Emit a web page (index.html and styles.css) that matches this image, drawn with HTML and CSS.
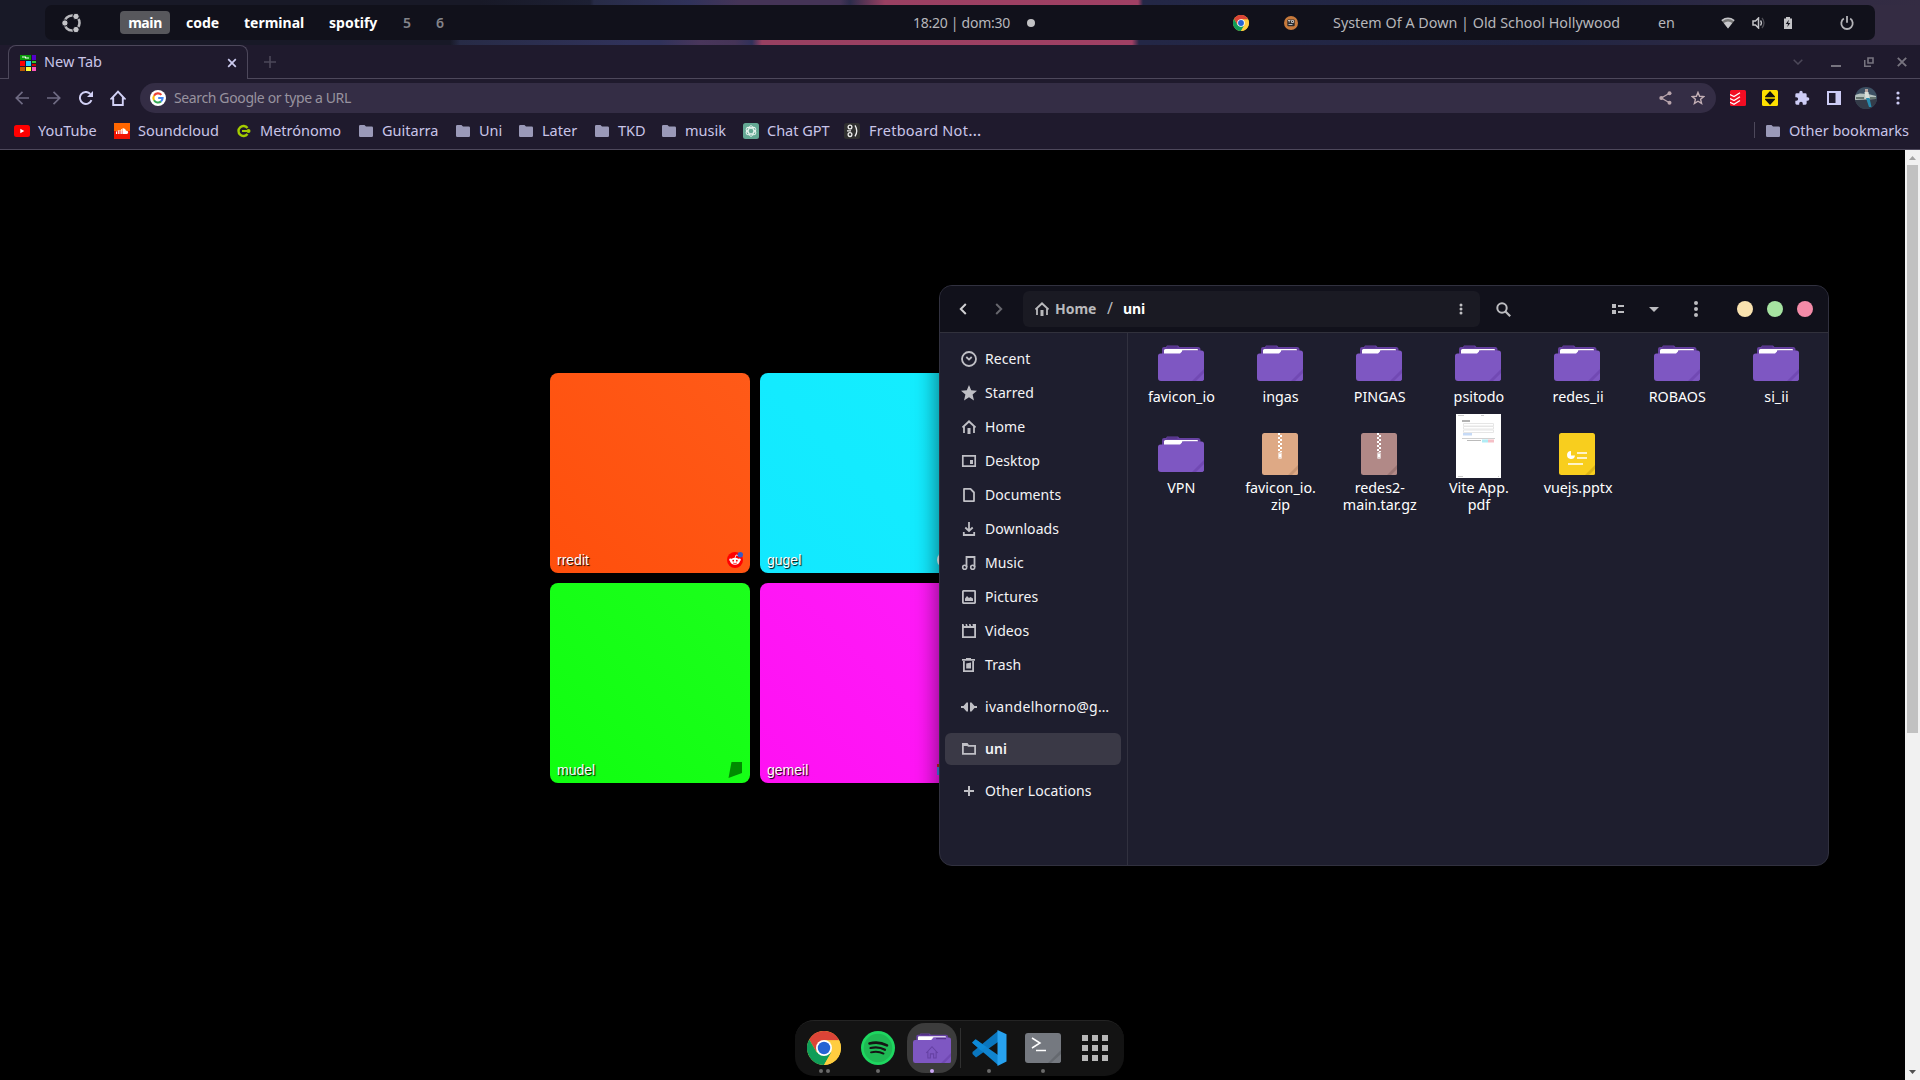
FILE: index.html
```html
<!DOCTYPE html>
<html lang="en">
<head>
<meta charset="utf-8">
<title>New Tab</title>
<link rel="stylesheet" href="styles.css">
</head>
<body>
<svg class="defs" width="0" height="0">
  <symbol id="folder" viewBox="0 0 46 36">
    <path d="M4 10V4a2 2 0 0 1 2-2h2l1-1.5h11L21.500 2H40a2.500 2.500 0 0 1 2.500 2.500V10z" fill="#6641a0"/>
    <path d="M9 1.500h10.500v1H9z" fill="#4b2d7c"/>
    <path d="M6 5.500a1.500 1.500 0 0 1 1.500-1.500H39a1 1 0 0 1 1 1v5H6z" fill="#fff"/>
    <path d="M24 5.500h16V8H24z" fill="#6641a0"/>
    <path d="M0 11a2.500 2.500 0 0 1 2.500-2.500H22L24.500 6a2 2 0 0 1 1.500-.6h17.500A2.500 2.500 0 0 1 46 7.900V33a3 3 0 0 1-3 3H3a3 3 0 0 1-3-3z" fill="#7e57c2"/>
    <path d="M46 24v9a3 3 0 0 1-3 3h-9z" fill="#7149b3"/>
    <path d="M46 28v5a3 3 0 0 1-3 3h-5z" fill="#7e57c2"/>
  </symbol>
  <symbol id="bmfolder" viewBox="0 0 14 12">
    <path d="M0 1.300A1.300 1.300 0 0 1 1.300 0H5.500L7 1.500h5.700A1.300 1.300 0 0 1 14 2.800v7.900a1.300 1.300 0 0 1-1.300 1.300H1.300A1.300 1.300 0 0 1 0 10.700z" fill="#9a99b8"/>
  </symbol>
  <symbol id="chrome" viewBox="0 0 48 48">
    <circle cx="24" cy="24" r="24" fill="#fc3"/>
    <path d="M3.200 12A24 24 0 0 1 44.800 12L44.800 13.500H24L13 29z" fill="#db4437"/>
    <path d="M3.200 12A24 24 0 0 0 24 48L34.400 30 24 34 13.600 30z" fill="#0f9d58"/>
    <path d="M24 13.200H45.400A24 24 0 0 1 24 48L34.400 30z" fill="#ffcd40"/>
    <circle cx="24" cy="24" r="11.300" fill="#fff"/>
    <circle cx="24" cy="24" r="8.800" fill="#2563d4"/>
  </symbol>
  <symbol id="home" viewBox="0 0 16 16">
    <path d="M3 14V7.200L8 2.500l5 4.700V14M1.500 8.500L8 2.300l6.500 6.200" fill="none" stroke="currentColor" stroke-width="1.800"/>
    <path d="M6.500 9h3v6h-3z" fill="currentColor"/>
  </symbol>
  <symbol id="zipper" viewBox="0 0 36 42">
    <path d="M17 0v19" stroke="#fff" stroke-width="2" stroke-dasharray="2 2"/>
    <path d="M19 2v17" stroke="#fff" stroke-width="2" stroke-dasharray="2 2"/>
    <rect x="16" y="19" width="4" height="7" rx="1.500" fill="#fff" fill-opacity=".6"/>
    <rect x="17" y="21" width="2" height="3" fill="#fff"/>
  </symbol>
</svg>

<header class="topbar">
  <div class="panel">
    <svg class="distro" viewBox="0 0 20 20"><circle cx="10" cy="10" r="7.500" fill="none" stroke="#b9b9bd" stroke-width="2.600"/><g fill="#c4c4c8" stroke="#11111b" stroke-width="1"><circle cx="2.900" cy="10" r="3.200"/><circle cx="14" cy="3.400" r="3.200"/><circle cx="14" cy="16.600" r="3.200"/></g></svg>
    <nav class="spaces">
      <span class="space active">main</span><span class="space s2">code</span><span class="space s3">terminal</span><span class="space s4">spotify</span><span class="space s5 dim">5</span><span class="space s6 dim">6</span>
    </nav>
    <div class="clock">18:20 | dom:30</div>
    <span class="notify"></span>
    <div class="tray">
      <svg class="t-chrome" width="16" height="16"><use href="#chrome"/></svg>
      <svg class="t-mate" width="14" height="14" viewBox="0 0 14 14"><circle cx="7" cy="7" r="7" fill="#c87a3c"/><rect x="3.300" y="3.600" width="7.400" height="6.600" rx="1" fill="#2b2b2e"/><path d="M4 4.500h2.500M5.200 4.500v2M7.500 4.500h2v2h-2zM4.500 8.500h4" stroke="#ddd" stroke-width=".8" fill="none"/></svg>
      <span class="song">System Of A Down | Old School Hollywood</span>
      <span class="lang">en</span>
      <svg class="t-wifi" width="14" height="12" viewBox="0 0 14 12"><path d="M0.500 3.500Q7-1.500 13.500 3.500L7 11.500z" fill="#777"/><path d="M.8 3.600Q7-1 13.200 3.600" fill="none" stroke="#c3c3c7" stroke-width="1.500"/><path d="M2.800 6Q7 3 11.200 6L7 11.500z" fill="#c8c8cc"/></svg>
      <svg class="t-vol" width="14" height="12" viewBox="0 0 14 12"><path d="M1 4h2.500L6.500 1v10L3.500 8H1z" fill="none" stroke="#c3c3c7" stroke-width="1.500"/><path d="M8.500 3.500q2 2.500 0 5" fill="none" stroke="#c3c3c7" stroke-width="1.300"/><path d="M10 1q4 5 0 10" fill="none" stroke="#4c4c54" stroke-width="1.300"/></svg>
      <svg class="t-bat" width="8" height="12" viewBox="0 0 8 12"><path d="M0 1.500h2V0h4v1.500h2V12H0z" fill="#c3c3c7"/><path d="M4.800 2.800L1.800 7H4l-.7 3L6.300 6H4.200z" fill="#11111b"/></svg>
      <svg class="t-pow" width="14" height="14" viewBox="0 0 14 14"><path d="M3.800 2.600a5.700 5.700 0 1 0 6.400 0M7 0v6.800" fill="none" stroke="#b4b4b8" stroke-width="1.800"/></svg>
    </div>
  </div>
</header>

<main class="browser">
  <div class="tabstrip">
    <div class="tab">
      <svg width="16" height="16" viewBox="0 0 16 16"><path d="M0 0h11v5H0z" fill="#0a9a0a"/><path d="M2 1.500h4v1h3v1H5v-1H2z" fill="#fff"/><path d="M12 0h4v5h-4z" fill="#50c"/><path d="M0 6h5v5H0z" fill="#f00"/><path d="M6 6h5v5H6z" fill="#2cf"/><path d="M12 6h4v2h-4z" fill="#3c3"/><path d="M12 9h4v2h-4z" fill="#c00"/><path d="M0 12h5v4H0z" fill="#b50"/><path d="M6 12h5v4H6z" fill="#ff3"/><path d="M12 12h4v4h-4z" fill="#f5b"/></svg>
      <span class="tabname">New Tab</span>
      <svg width="10" height="10" viewBox="0 0 10 10"><path d="M1.200 1.200l7.600 7.600M8.800 1.200L1.200 8.800" stroke="#cdccf0" stroke-width="1.700"/></svg>
    </div>
    <svg class="newtab" width="12" height="12" viewBox="0 0 12 12"><path d="M6 0v12M0 6h12" stroke="#4c4859" stroke-width="1.600"/></svg>
    <div class="winbtns">
      <svg width="10" height="6" viewBox="0 0 10 6"><path d="M.7.700L5 5l4.300-4.300" fill="none" stroke="#4c4859" stroke-width="1.500"/></svg>
      <svg width="10" height="10" viewBox="0 0 10 10"><path d="M0 9h10" stroke="#77747f" stroke-width="2"/></svg>
      <svg width="10" height="10" viewBox="0 0 10 10"><path d="M4 1h5v5H4zM.7 3v6.300H7" fill="none" stroke="#77747f" stroke-width="1.600"/></svg>
      <svg width="10" height="10" viewBox="0 0 10 10"><path d="M.8.800l8.400 8.400M9.200.800L.8 9.200" stroke="#77747f" stroke-width="1.900"/></svg>
    </div>
  </div>
  <div class="toolbar">
    <div class="navbtns">
      <svg width="14" height="14" viewBox="0 0 14 14"><path d="M14 7H1.500M7.500.8L1.300 7l6.200 6.200" fill="none" stroke="#6f6b83" stroke-width="1.700"/></svg>
      <svg width="14" height="14" viewBox="0 0 14 14"><path d="M0 7h12.500M6.500.8L12.700 7l-6.200 6.200" fill="none" stroke="#6f6b83" stroke-width="1.700"/></svg>
      <svg width="14" height="14" viewBox="0 0 14 14"><path d="M12.500 9.200A6 6 0 1 1 11.300 2.800" fill="none" stroke="#d2d1f5" stroke-width="1.900"/><path d="M14 0v6H8z" fill="#d2d1f5"/></svg>
      <svg width="16" height="16" viewBox="0 0 16 16"><path d="M3.200 15V8.500H1.500L8 1.600l6.500 6.900h-1.700V15z" fill="none" stroke="#d2d1f5" stroke-width="1.900"/></svg>
    </div>
    <div class="omnibox">
      <svg width="16" height="16" viewBox="0 0 16 16"><circle cx="8" cy="8" r="8" fill="#fff"/><g fill="none" stroke-width="2.100"><path d="M11.400 4.900A4.600 4.600 0 0 0 4 5.700" stroke="#ea4335"/><path d="M4 5.700a4.600 4.600 0 0 0 0 4.600" stroke="#fbbc05"/><path d="M4 10.300a4.600 4.600 0 0 0 7 1.100" stroke="#34a853"/><path d="M11 11.400A4.600 4.600 0 0 0 12.600 8H8.200" stroke="#4285f4"/></g></svg>
      <span class="query">Search Google or type a URL</span>
      <svg class="share" width="13" height="14" viewBox="0 0 13 14"><path d="M10.500 2.300L2.300 7l8.200 4.700" fill="none" stroke="#b8a4ac" stroke-width="1.300"/><g fill="#b8a4ac"><circle cx="10.500" cy="2.300" r="2"/><circle cx="2.300" cy="7" r="2"/><circle cx="10.500" cy="11.700" r="2"/></g></svg>
      <svg class="star" width="14" height="14" viewBox="0 0 14 14"><path d="M7 1.400l1.600 3.900 4.200.3-3.200 2.700 1 4.100L7 10.200l-3.600 2.200 1-4.100L1.200 5.600l4.200-.3z" fill="none" stroke="#c3afb5" stroke-width="1.400"/></svg>
    </div>
    <div class="exts">
      <svg width="16" height="16" viewBox="0 0 16 16"><rect width="16" height="16" rx="1.500" fill="#f20d23"/><path d="M0 4.500l4 2 6-3.800M0 8.500l4 2 6-3.800M0 12.300l4 2 6-3.800" fill="none" stroke="#fff" stroke-width="1.300"/></svg>
      <svg width="16" height="16" viewBox="0 0 16 16"><rect width="16" height="16" rx="1.500" fill="#fee000"/><path d="M8 1l5 5.500V7H3v-.5zM3 9h10v.5L8 15 3 9.500z" fill="#111"/><path d="M3 8h10" stroke="#443f00" stroke-width=".7"/></svg>
      <svg width="16" height="16" viewBox="0 0 24 24"><path d="M20.500 11H19V7a2 2 0 0 0-2-2h-4V3.500a2.500 2.500 0 0 0-5 0V5H4a2 2 0 0 0-2 2v3.800h1.500a2.700 2.700 0 0 1 0 5.400H2V20a2 2 0 0 0 2 2h3.800v-1.500a2.700 2.700 0 0 1 5.400 0V22H17a2 2 0 0 0 2-2v-4h1.500a2.500 2.500 0 0 0 0-5z" fill="#cdccf5"/></svg>
      <svg width="16" height="16" viewBox="0 0 16 16"><path d="M1 1h14v14H1zM3 3v10h6.500V3z" fill="#cdccf5" fill-rule="evenodd"/></svg>
      <svg class="avatar" width="22" height="22" viewBox="0 0 22 22"><defs><clipPath id="av"><circle cx="11" cy="11" r="11"/></clipPath></defs><g clip-path="url(#av)"><path d="M0 0h22v22H0z" fill="#3d5063"/><path d="M0 12h22v10H0z" fill="#343c49"/><path d="M0 8L5 6.500 13 7l8 2v3l-9 .5-12 .5z" fill="#b4c1be"/><path d="M1 10h8v2H1zM15 10h6v2h-6z" fill="#65746f"/><path d="M10 2h3v3h-3z" fill="#b8a5a0"/><path d="M9.500 5h4l1 7h-4z" fill="#d9dfd9"/><path d="M11 11h3.500l2 9H14z" fill="#278caf"/></g></svg>
      <svg class="kebab" width="4" height="14" viewBox="0 0 4 14"><g fill="#cdccf5"><circle cx="2" cy="2" r="1.600"/><circle cx="2" cy="7" r="1.600"/><circle cx="2" cy="12" r="1.600"/></g></svg>
    </div>
  </div>
  <div class="bookmarks">
    <a class="bm b1"><svg width="16" height="12" viewBox="0 0 16 12"><rect width="16" height="12" rx="2.500" fill="#f00"/><path d="M6.300 3.800L10.300 6l-4 2.200z" fill="#fff"/></svg>YouTube</a>
    <a class="bm b2"><svg width="16" height="16" viewBox="0 0 16 16"><path d="M0 0h16v8H0z" fill="#f60"/><path d="M0 8h16v8H0z" fill="#f11300"/><path d="M2.500 8.500V11M4.300 7.300V11M6 7v4M7.700 6v5" stroke="#fff"/><path d="M8.500 5.300q3-.6 3.500 2.500 2.200-.3 2.200 1.500T12.500 11h-4z" fill="#fff"/></svg>Soundcloud</a>
    <a class="bm b3"><svg width="16" height="16" viewBox="0 0 16 16"><path d="M11.500 5A5 5 0 1 0 11.500 11" fill="none" stroke="#a4cc00" stroke-width="2.400"/><path d="M6 8h6" stroke="#a4cc00" stroke-width="2"/><circle cx="12.500" cy="8" r="2" fill="#a4cc00"/></svg>Metrónomo</a>
    <a class="bm b4"><svg width="14" height="12"><use href="#bmfolder"/></svg>Guitarra</a>
    <a class="bm b5"><svg width="14" height="12"><use href="#bmfolder"/></svg>Uni</a>
    <a class="bm b6"><svg width="14" height="12"><use href="#bmfolder"/></svg>Later</a>
    <a class="bm b7"><svg width="14" height="12"><use href="#bmfolder"/></svg>TKD</a>
    <a class="bm b8"><svg width="14" height="12"><use href="#bmfolder"/></svg>musik</a>
    <a class="bm b9"><svg width="16" height="16" viewBox="0 0 16 16"><rect width="16" height="16" rx="2.500" fill="#63a894"/><g fill="none" stroke="#e8f4ef" stroke-width=".9"><ellipse cx="8" cy="8" rx="2.700" ry="5.300"/><ellipse cx="8" cy="8" rx="2.700" ry="5.300" transform="rotate(60 8 8)"/><ellipse cx="8" cy="8" rx="2.700" ry="5.300" transform="rotate(120 8 8)"/></g></svg>Chat GPT</a>
    <a class="bm b10"><svg width="16" height="16" viewBox="0 0 16 16"><rect width="16" height="16" rx="2.500" fill="#303030"/><g fill="none" stroke="#eee" stroke-width="1.300"><circle cx="6" cy="4" r="1.900"/><circle cx="6" cy="11.600" r="1.900"/><path d="M3 7.800h4M11 2.300q3.500 5.500 0 11"/></g></svg><span class="cut">Fretboard Not<span class="dots3">…</span></span></a>
    <span class="bmsep"></span>
    <a class="bm other"><svg width="14" height="12"><use href="#bmfolder"/></svg>Other bookmarks</a>
  </div>
  <div class="viewport">
    <div class="page">
      <div class="tiles">
        <a class="tile orange"><span>rredit</span><svg width="16" height="16" viewBox="0 0 16 16"><circle cx="8" cy="8" r="8" fill="#f00"/><ellipse cx="8" cy="9.300" rx="4.800" ry="3.500" fill="#fff"/><circle cx="3.500" cy="7.800" r="1.300" fill="#fff"/><circle cx="12.500" cy="7.800" r="1.300" fill="#fff"/><path d="M8 6l1-3 2 .5" fill="none" stroke="#fff" stroke-width=".8"/><circle cx="6.200" cy="8.700" r=".9" fill="#f00"/><circle cx="9.800" cy="8.700" r=".9" fill="#f00"/><path d="M6 11q2 1.200 4 0" fill="none" stroke="#f00" stroke-width=".7"/><circle cx="13.300" cy="2.700" r="2.700" fill="#3559c7"/></svg></a>
        <a class="tile cyan"><span>gugel</span><svg width="16" height="16" viewBox="0 0 16 16"><circle cx="8" cy="8" r="8" fill="#fff"/></svg></a>
        <a class="tile green"><span>mudel</span><svg width="16" height="16" viewBox="0 0 16 16"><path d="M4.500 0H15v11L1.500 16z" fill="#008b00"/></svg></a>
        <a class="tile pink"><span>gemeil</span><svg width="16" height="16" viewBox="0 0 16 16"><path d="M0 4h4v9H0z" fill="#4285f4"/><path d="M0 2h5v3H0z" fill="#c5221f"/></svg></a>
      </div>
    </div>
    <div class="scrollbar">
      <svg width="15" height="15" viewBox="0 0 15 15"><path d="M4 10l3.500-4L11 10z" fill="#a3a3a3"/></svg>
      <div class="thumb"></div>
      <svg width="15" height="15" viewBox="0 0 15 15"><path d="M4 5l3.500 4L11 5z" fill="#505050"/></svg>
    </div>
  </div>
</main>

<section class="files">
  <div class="headbar">
    <svg class="back" width="8" height="12" viewBox="0 0 8 12"><path d="M6.800 1L1.800 6l5 5" fill="none" stroke="#cfcfd2" stroke-width="2"/></svg>
    <svg class="fwd" width="8" height="12" viewBox="0 0 8 12"><path d="M1.200 1l5 5-5 5" fill="none" stroke="#66666d" stroke-width="2"/></svg>
    <div class="path">
      <svg width="16" height="16"><use href="#home"/></svg>
      <span class="crumb">Home</span><span class="slash">/</span><span class="crumb now">uni</span>
      <svg class="dots" width="4" height="12" viewBox="0 0 4 12"><g fill="#c0c0c3"><circle cx="2" cy="2" r="1.500"/><circle cx="2" cy="6" r="1.500"/><circle cx="2" cy="10" r="1.500"/></g></svg>
    </div>
    <svg class="search" width="15" height="15" viewBox="0 0 15 15"><circle cx="6" cy="6" r="4.700" fill="none" stroke="#bcbcc0" stroke-width="2"/><path d="M9.500 9.500l4.700 4.700" stroke="#bcbcc0" stroke-width="2.200"/></svg>
    <svg class="view" width="12" height="10" viewBox="0 0 12 10"><path d="M0 0h4v4H0zM0 6h4v4H0zM6 1h6v2H6zM6 7h6v2H6z" fill="#bcbcc0"/></svg>
    <svg class="caret" width="10" height="5" viewBox="0 0 10 5"><path d="M0 0h10L5 5z" fill="#bcbcc0"/></svg>
    <svg class="menu" width="4" height="16" viewBox="0 0 4 16"><g fill="#bcbcc0"><circle cx="2" cy="2" r="2"/><circle cx="2" cy="8" r="2"/><circle cx="2" cy="14" r="2"/></g></svg>
    <div class="lights"><i class="yellow"></i><i class="lime"></i><i class="rose"></i></div>
  </div>
  <div class="filebody">
    <aside class="places">
      <div class="place"><svg viewBox="0 0 16 16"><circle cx="8" cy="8" r="7" fill="none" stroke="currentColor" stroke-width="1.800"/><path d="M5.300 6L8 8.600 10.700 6" fill="none" stroke="currentColor" stroke-width="1.800"/></svg>Recent</div>
      <div class="place"><svg viewBox="0 0 16 16"><path d="M8 0l2.200 5.300 5.800.5-4.400 3.800L13 15.500l-5-3.200-5 3.200 1.400-5.900L0 5.800l5.800-.5z" fill="currentColor"/></svg>Starred</div>
      <div class="place"><svg viewBox="0 0 16 16"><use href="#home"/></svg>Home</div>
      <div class="place"><svg viewBox="0 0 16 16"><path d="M1.800 2.800h12.400v10.400H1.800z" fill="none" stroke="currentColor" stroke-width="1.700"/><path d="M9 7h3v4H9z" fill="currentColor"/></svg>Desktop</div>
      <div class="place"><svg viewBox="0 0 16 16"><path d="M3 1.900h6.500L13 5.500v8.600H3z" fill="none" stroke="currentColor" stroke-width="1.800" stroke-linejoin="round"/></svg>Documents</div>
      <div class="place"><svg viewBox="0 0 16 16"><path d="M8 1v8M4.300 6.500L8 10l3.700-3.500M2.800 11v3h10.400v-3" fill="none" stroke="currentColor" stroke-width="1.800"/></svg>Downloads</div>
      <div class="place"><svg viewBox="0 0 16 16"><path d="M5.500 12V2h8v10" fill="none" stroke="currentColor" stroke-width="1.800"/><g fill="none" stroke="currentColor" stroke-width="1.600"><circle cx="3.700" cy="12.200" r="2"/><circle cx="11.700" cy="12.200" r="2"/></g></svg>Music</div>
      <div class="place"><svg viewBox="0 0 16 16"><rect x="1.900" y="1.900" width="12.200" height="12.200" rx=".5" fill="none" stroke="currentColor" stroke-width="1.800"/><path d="M4 12V9.500L6 7l2 2 1.500-1L12 9.500V12z" fill="currentColor"/></svg>Pictures</div>
      <div class="place"><svg viewBox="0 0 16 16"><path d="M1.900 4h12.200v10.100H1.900z" fill="none" stroke="currentColor" stroke-width="1.800"/><path d="M1 1h1.500l1 3H5L4.500 1H6l1 3h1.500L8 1h1.500l1 3H12l-.5-3H15v4H1z" fill="currentColor"/></svg>Videos</div>
      <div class="place"><svg viewBox="0 0 16 16"><path d="M2.900 4v10.100h9.200V4" fill="none" stroke="currentColor" stroke-width="1.800"/><path d="M1 2h4V1h5v1h4v1.700H1zM5.200 6.500l4.800-1v6H5.200z" fill="currentColor"/></svg>Trash</div>
      <div class="place gap"><svg viewBox="0 0 16 16"><path d="M0 7h2.500L5.500 3.500h1.500v9H5.500L2.500 9H0zM9 3.500h1.500L13.500 7H16v2h-2.500l-3 3.500H9z" fill="currentColor"/></svg><span class="clip">ivandelhorno@g…</span></div>
      <div class="place gap current"><svg viewBox="0 0 16 16"><path d="M1.900 12.900V3h4l1.500 1.900h6.700v8z" fill="none" stroke="currentColor" stroke-width="1.800"/><path d="M1 2h5l2 3H1z" fill="currentColor"/></svg>uni</div>
      <div class="place gap"><svg viewBox="0 0 16 16"><path d="M8 3v10M3 8h10" stroke="currentColor" stroke-width="2"/></svg><span class="wide">Other Locations</span></div>
    </aside>
    <div class="grid">
      <figure class="item"><svg class="fold"><use href="#folder"/></svg><figcaption>favicon_io</figcaption></figure>
      <figure class="item"><svg class="fold"><use href="#folder"/></svg><figcaption>ingas</figcaption></figure>
      <figure class="item"><svg class="fold"><use href="#folder"/></svg><figcaption>PINGAS</figcaption></figure>
      <figure class="item"><svg class="fold"><use href="#folder"/></svg><figcaption>psitodo</figcaption></figure>
      <figure class="item"><svg class="fold"><use href="#folder"/></svg><figcaption>redes_ii</figcaption></figure>
      <figure class="item"><svg class="fold"><use href="#folder"/></svg><figcaption>ROBAOS</figcaption></figure>
      <figure class="item"><svg class="fold"><use href="#folder"/></svg><figcaption>si_ii</figcaption></figure>
      <figure class="item"><svg class="fold"><use href="#folder"/></svg><figcaption>VPN</figcaption></figure>
      <figure class="item"><svg class="doc" viewBox="0 0 36 42"><rect width="36" height="42" rx="2.500" fill="#dea985"/><path d="M36 32v7.500a2.500 2.500 0 0 1-2.500 2.500H26z" fill="#c99674"/><path d="M36 36v3.500a2.500 2.500 0 0 1-2.500 2.500H30z" fill="#dea985"/><use href="#zipper"/></svg><figcaption>favicon_io.<br>zip</figcaption></figure>
      <figure class="item"><svg class="doc" viewBox="0 0 36 42"><rect width="36" height="42" rx="2.500" fill="#b18987"/><path d="M36 32v7.500a2.500 2.500 0 0 1-2.500 2.500H26z" fill="#9c7674"/><path d="M36 36v3.500a2.500 2.500 0 0 1-2.500 2.500H30z" fill="#b18987"/><use href="#zipper"/></svg><figcaption>redes2-<br>main.tar.gz</figcaption></figure>
      <figure class="item"><svg class="pdf" viewBox="0 0 45 64"><path d="M0 0h45v64H0z" fill="#fff"/><path d="M2 1.500h6M25 1.500h3M2 62.500h5M42 62.500h1" stroke="#ccc"/><path d="M6 7h8" stroke="#999" stroke-width="1.500"/><g fill="none" stroke="#e6e6e6"><path d="M7.500 9.500h30v2.500h-30zM7.500 12.500h30v2.500h-30zM7.500 16h30v2.500h-30z"/></g><path d="M7 19h9v2.500H7z" fill="#c6daf6"/><path d="M6 24.500h33" stroke="#d0d0d0"/><path d="M11 26.500h14" stroke="#bbb"/><path d="M26 25.500h6v3h-6z" fill="#b0ecf5"/><path d="M32 25.500h6v3h-6z" fill="#f5bfc6"/></svg><figcaption>Vite App.<br>pdf</figcaption></figure>
      <figure class="item"><svg class="doc" viewBox="0 0 36 42"><rect width="36" height="42" rx="2.500" fill="#f8ce1e"/><path d="M36 32v7.500a2.500 2.500 0 0 1-2.500 2.500H26z" fill="#dcb515"/><path d="M36 36v3.500a2.500 2.500 0 0 1-2.500 2.500H30z" fill="#f8ce1e"/><path d="M12 18a4 4 0 1 0 4 4.500h-4z" fill="#fff"/><path d="M18 20h10M18 25h10M9 31h15" stroke="#fff" stroke-width="1.700"/></svg><figcaption>vuejs.pptx</figcaption></figure>
    </div>
  </div>
</section>

<nav class="dock">
  <div class="app"><svg width="34" height="34"><use href="#chrome"/></svg><i></i><i></i></div>
  <div class="app"><svg width="34" height="34" viewBox="0 0 34 34"><circle cx="17" cy="17" r="17" fill="#1ed760"/><circle cx="17" cy="17" r="14.300" fill="#1fb954"/><g fill="none" stroke="#151515" stroke-linecap="round"><path d="M8.500 12.500q9-2.500 17.500 1.800" stroke-width="2.600"/><path d="M9.500 17q8-2 14.500 1.800" stroke-width="2.200"/><path d="M10 21.300q7-1.700 12.500 1.300" stroke-width="1.900"/></g></svg><i></i></div>
  <div class="app focus"><svg width="38" height="30" viewBox="0 0 46 36" preserveAspectRatio="none"><use href="#folder" width="46" height="36"/><path d="M16 24l7-7.500 7 7.500M18 22v8h3v-5h4v5h3v-8" fill="none" stroke="#6541a3" stroke-width="1.300"/><path d="M28 6.700h12" stroke="#56348c" stroke-width="1.500"/></svg><i></i></div>
  <span class="docksep"></span>
  <div class="app"><svg width="36" height="36" viewBox="0 0 36 36"><path d="M27 1v11L5 27.500 1.500 24V22z" fill="#0a76be"/><path d="M1.500 13L5 9.500 27 25v10z" fill="#1084cf"/><path d="M26.500 0L35.500 4.200V31.600L26.500 36z" fill="#27a2f0"/><path d="M1 12.500l3.500-3.300L15 17l-5 3.500z" fill="#0d8ad8"/></svg><i></i></div>
  <div class="app"><svg width="36" height="30" viewBox="0 0 36 30"><rect width="36" height="30" rx="3" fill="#757980"/><path d="M36 17v10a3 3 0 0 1-3 3H23z" fill="#65696f"/><path d="M36 21v6a3 3 0 0 1-3 3h-7z" fill="#757980"/><path d="M7 5l8 5-8 5M11 17.500h10" fill="none" stroke="#fff" stroke-width="1.500"/></svg><i></i></div>
  <div class="app"><svg width="26" height="26" viewBox="0 0 26 26"><g fill="#b8b8b8"><path d="M0 0h6v6H0zM10 0h6v6h-6zM20 0h6v6h-6zM0 10h6v6H0zM10 10h6v6h-6zM20 10h6v6h-6zM0 20h6v6H0zM10 20h6v6h-6zM20 20h6v6h-6z"/></g></svg></div>
</nav>
</body>
</html>
```
FILE: styles.css
```css
* { box-sizing: border-box; }
body { margin: 0; width: 1920px; height: 1080px; overflow: hidden; background: #000; font-family: "Noto Sans", "Open Sans", sans-serif; display: flex; flex-direction: column; position: relative; }
svg { display: block; flex: none; }
.defs { position: absolute; }

/* desktop panel */
.topbar { height: 45px; padding: 5px 45px; background:
  linear-gradient(90deg, #181927 0 450px, #272b46 460px, #30325a 630px, #30325a 660px, #49365b 700px, #453457 735px, #30315a 752px, #984061 762px, #a04064 1132px, #232746 1139px, #212543 1550px, #2d2943 1750px, #342c43 1920px) 0 40px / 100% 5px no-repeat,
  linear-gradient(90deg, #181927 0 480px, #1d2034 590px, #272b46 594px, #30325a 690px, #453457 740px, #453457 840px, #2c2c4b 850px, #9a4062 885px, #a04064 1138px, #232746 1143px, #212543 1550px, #2d2943 1750px, #342c43 1920px) 0 0 / 100% 5px no-repeat,
  linear-gradient(90deg, #181927 50%, #342c43 50%); }
.panel { height: 35px; background: #11111b; border-radius: 7px; display: flex; align-items: center; padding: 0 21px 0 17px; font-size: 14.3px; color: #b7b7bb; }
.distro { width: 20px; height: 20px; margin-right: 38px; }
.spaces { display: flex; flex: none; align-items: center; width: 793px; font-weight: 700; font-size: 14px; color: #fff; line-height: 23px; }
.space { white-space: nowrap; width: 57px; }
.space.active { width: 50px; height: 23px; text-align: center; background: #57575c; border-radius: 4px; margin-right: 16px; line-height: 23px; letter-spacing: -.4px; }
.s2 { width: 58px; }
.s3 { width: 85px; }
.s4 { width: 74px; }
.s5 { width: 33px; }
.space.dim { color: #84848a; font-weight: 600; }
.clock { flex: none; width: 114px; font-size: 14px; white-space: nowrap; letter-spacing: -.27px; }
.notify { flex: none; width: 8px; height: 8px; border-radius: 50%; background: #c2c2c5; }
.tray { display: flex; align-items: center; flex: 1; }
.t-chrome { margin-left: 198px; }
.t-mate { margin-left: 35px; }
.song { flex: none; margin-left: 35px; width: 325px; white-space: nowrap; letter-spacing: .03px; }
.lang { flex: none; width: 63px; }
.t-wifi { margin-right: 17px; }
.t-vol { margin-right: 18px; }
.t-bat { margin-right: 48px; }

/* browser */
.browser { flex: 1; display: flex; flex-direction: column; background: #1f1a2d; color: #c9c5e8; }
.tabstrip { height: 34px; border-bottom: 1px solid #4d485b; display: flex; padding-left: 8px; align-items: center; }
.tab { width: 240px; height: 34px; margin-bottom: -1px; border: 1px solid #4d485b; border-bottom: 0; border-radius: 8px 8px 0 0; background: #1f1a2d; display: flex; align-items: center; padding: 0 10px 0 11px; font-size: 14.5px; align-self: flex-start; }
.tabname { flex: 1; padding: 0 0 3px 8px; }
.newtab { margin-left: 16px; }
.winbtns { margin-left: auto; display: flex; align-items: center; gap: 23px; padding-right: 13px; }
.winbtns svg:first-child { margin-right: 5px; }
.toolbar { height: 38px; display: flex; align-items: center; }
.navbtns { width: 140px; padding-left: 15px; display: flex; align-items: center; gap: 18px; }
.navbtns svg:nth-child(4) { margin-left: -1px; }
.omnibox { width: 1576px; height: 30px; border-radius: 15px; background: #342d45; display: flex; align-items: center; padding: 0 11px 0 10px; }
.query { flex: 1; padding: 0 0 2px 8px; font-size: 14px; letter-spacing: -.37px; color: #98939f; }
.share { margin-right: 19px; }
.exts { display: flex; align-items: center; gap: 16px; padding-left: 14px; }
.avatar { margin: 0 3px 0 -3px; }
.bookmarks { height: 33px; border-bottom: 1px solid #4d485b; display: flex; align-items: center; padding: 0 11px 6px 14px; font-size: 14.5px; }
.bm { display: flex; align-items: center; gap: 8px; white-space: nowrap; }
.bm svg { margin-top: 2px; }
.b1 { width: 100px; }
.b2 { width: 122px; }
.b3 { width: 123px; }
.b4, .b5, .b6, .b7, .b8 { gap: 9px; }
.b4 { width: 97px; }
.b5 { width: 63px; }
.b6 { width: 76px; }
.b7 { width: 67px; }
.b8 { width: 81px; }
.b9 { width: 101px; }
.b10 { gap: 9px; }
.cut { letter-spacing: .25px; }
.dots3 { font-size: 16.5px; line-height: 1; }
.bmsep { width: 1px; height: 16px; background: #4d485b; margin: 0 11px 0 auto; }
.other { gap: 9px; }
.viewport { flex: 1; background: #000; display: flex; justify-content: space-between; }
.page { flex: 1; padding: 223px 0 0 550px; }
.tiles { display: grid; grid-template-columns: repeat(2, 200px); grid-auto-rows: 200px; gap: 10px; }
.tile { border-radius: 8px; display: flex; align-items: flex-end; justify-content: space-between; padding: 0 7px 5px; font: 14px/16px "Liberation Sans", Arial, sans-serif; color: #fff; text-shadow: 1px 1px 1px #000; }
.orange { background: linear-gradient(45deg, #ff4f0c, #ff5a18); }
.cyan { background: linear-gradient(45deg, #12e8ff, #14eeff); }
.green { background: linear-gradient(45deg, #10ff10, #1cff1c); }
.pink { background: linear-gradient(45deg, #ff10f3, #ff1cf8); }
.scrollbar { width: 15px; background: #f1f1f1; display: flex; flex-direction: column; }
.thumb { width: 11px; height: 568px; margin: 0 2px auto; background: #c1c1c1; }

/* file manager */
.files { position: absolute; left: 939px; top: 285px; width: 890px; height: 581px; border: 1px solid #31313f; border-radius: 13px; background: #1e1e2e; overflow: hidden; color: #fff; font-size: 14px; display: flex; flex-direction: column; box-shadow: 0 3px 22px 2px rgba(0, 0, 0, .5); }
.headbar { height: 47px; background: #11111b; border-bottom: 1px solid #31313c; display: flex; align-items: center; padding: 0 15px 0 19px; }
.fwd { margin: 0 26px 0 28px; }
.path { width: 457px; height: 36px; border-radius: 6px; margin-left: -6px; background: #1a1a23; display: flex; align-items: center; padding: 0 17px 0 11px; font-weight: 700; color: #b9b9bc; }
.crumb { padding: 0 0 2px 5px; }
.slash { font-weight: 400; padding: 0 5px 2px 10.500px; font-size: 16px; }
.now { color: #fff; }
.dots { margin-left: auto; }
.search { margin-left: 16px; }
.view { margin-left: 101px; }
.caret { margin-left: 25px; }
.menu { margin-left: 35px; }
.lights { display: flex; gap: 14px; margin-left: auto; }
.lights i { width: 16px; height: 16px; border-radius: 50%; }
.yellow { background: #f9e2af; }
.lime { background: #a6e3a1; }
.rose { background: #f38ba8; }
.filebody { flex: 1; display: flex; }
.places { width: 188px; border-right: 1px solid #31313f; padding: 10px 6px 0 5px; color: #f4f4f6; display: flex; flex-direction: column; gap: 2px; }
.place { height: 32px; display: flex; align-items: center; gap: 8px; padding: 0 0 2px 16px; border-radius: 6px; white-space: nowrap; letter-spacing: .08px; }
.place svg { width: 16px; height: 16px; margin-top: 2px; color: #bfbfc5; }
.clip { letter-spacing: .32px; }
.wide { letter-spacing: .12px; }
.gap { margin-top: 8px; }
.current { background: #3a3946; font-weight: 600; }
.grid { flex: 1; display: grid; grid-template-columns: repeat(7, 99.200px); grid-template-rows: 75px 100px; align-content: start; padding: 0 0 0 3px; }
.item { margin: 0; height: 75px; display: flex; flex-direction: column; align-items: center; font-size: 14.3px; line-height: 17px; text-align: center; }
.item figcaption { padding-left: 1.500px; }
.item:nth-child(-n+7) { padding-top: 12px; }
.item:nth-child(n+8) { height: 100px; padding-top: 6px; }
.fold { width: 46px; height: 36px; }
.item:nth-child(8) .fold { margin: 22px 0 7px; }
.item:nth-child(-n+7) .fold { margin-bottom: 7px; }
.item:nth-child(7) .fold { margin-left: 1px; }
.doc { width: 36px; height: 42px; margin: 19px 0 4px; }
.pdf { width: 45px; height: 64px; margin: 0 0 1px 1px; }

/* dock */
.dock { position: absolute; left: 795px; top: 1020px; width: 329px; height: 56px; border-radius: 19px; background: #131313; border-top: 1px solid #242424; display: flex; align-items: flex-start; padding: 2px 2px 0; }
.app { width: 54px; height: 50px; display: flex; flex-wrap: wrap; justify-content: center; align-content: flex-start; gap: 0 3px; padding-top: 8px; }
.app svg { margin: 0 8px 4px; }
.app i { width: 4px; height: 4px; border-radius: 50%; background: #6a6a6a; }
.focus { width: 50px; margin: 0 2px; border-radius: 18px; background: #3c3c3c; padding-top: 10px; }
.focus svg { margin: 0 6px 6px; }
.app.focus i { background: #cba6f7; }
.docksep { width: 1px; height: 40px; background: #303030; margin: 5px 1px 0; }
.docksep + .app { padding-top: 7px; }
.docksep + .app svg { margin-bottom: 3px; }
.docksep + .app + .app { padding-top: 10px; }
.docksep + .app + .app svg { margin-bottom: 6px; }
.app:last-child { width: 50px; padding-top: 12px; }
```
